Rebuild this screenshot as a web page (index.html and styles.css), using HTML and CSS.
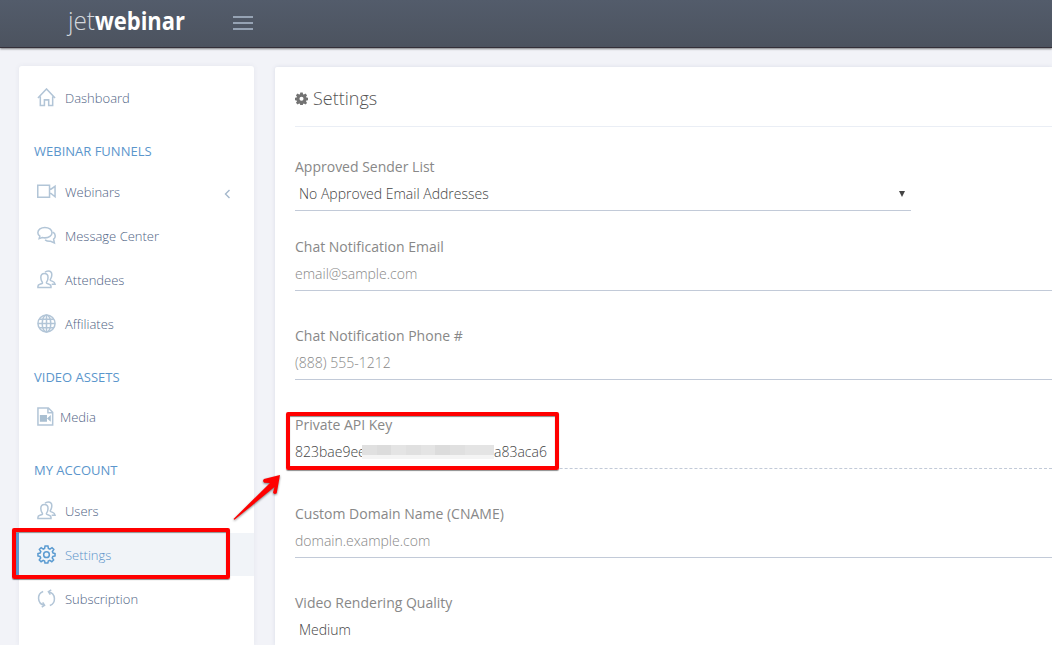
FILE: index.html
```html
<!DOCTYPE html>
<html lang="en">
<head>
<meta charset="utf-8">
<title>JetWebinar Settings</title>
<link rel="stylesheet" href="styles.css">
</head>
<body>
<header class="topbar">
  <svg class="logo" width="122" height="40" viewBox="0 0 122 40"><text class="logo-jet" x="5" y="29.500" textLength="27" lengthAdjust="spacingAndGlyphs">jet</text><text class="logo-web" x="32" y="29.500" textLength="90" lengthAdjust="spacingAndGlyphs">webinar</text></svg>
  <div class="burger"><i></i><i></i><i></i></div>
</header>
<div class="layout">
  <nav class="sidebar">
    <a class="item"><svg class="icon" viewBox="0 0 20 20"><path d="M1 10.500 10 1l9 9.500M3.500 9v9.500h4.300v-6h4.500v6h4.200V9"/></svg>Dashboard</a>
    <h2 class="group">WEBINAR FUNNELS</h2>
    <a class="item"><svg class="icon" viewBox="0 0 20 20"><path d="M.8 3.500h12.400v12.500H.8zM13.200 7.500h1.500L19 4.500v11l-4.300-3.500h-1.500"/></svg>Webinars<svg class="chevron" viewBox="0 0 6 10"><path d="M5 1 1 5l4 4"/></svg></a>
    <a class="item"><svg class="icon" viewBox="0 0 20 20"><path d="M8.300 1.500c4.200 0 7.500 2.400 7.500 5.500s-3.300 5.500-7.500 5.500q-1.500 0-2.800-.4L2.300 13.300l.7-2.600Q.9 9.200.9 7c0-3.100 3.300-5.500 7.400-5.500zM17 6.500q2.200 1.500 2.200 4 0 2-1.700 3.400l.8 3.900-3.900-1.700Q11 16.500 8.500 14.700"/></svg>Message Center</a>
    <a class="item"><svg class="icon" viewBox="0 0 20 20"><path d="M1 18.500v-1.500q0-1.400 2-2l2.300-.8q.8-.4.300-1.300Q4 10.500 4 7.800q0-4 3.800-4t3.800 4q0 2.700-1.500 5-.5.900.3 1.300l2.300.8q2 .6 2 2v1.600zM8.500 2.300Q9.600 1 11.800 1q3.800 0 3.800 4 0 2.600-1.500 4.900-.5.900.4 1.300l2 .8q2 .7 2.500 3h-3.500"/></svg>Attendees</a>
    <a class="item"><svg class="icon" viewBox="0 0 20 20"><circle cx="10" cy="10" r="9"/><ellipse cx="10" cy="10" rx="4.500" ry="9"/><path d="M10 1v18M1 10h18M2.500 5.500h15M2.500 14.500h15"/></svg>Affiliates</a>
    <h2 class="group group-assets">VIDEO ASSETS</h2>
    <a class="item media"><svg class="icon" viewBox="0 0 20 20"><path d="M1 1h11l4.500 4.500V19H1zM11.500 1v5h5"/><path class="fill" d="M3 8.500h7.500v7H3zM10.500 12l4-3.500v7z"/></svg>Media</a>
    <h2 class="group">MY ACCOUNT</h2>
    <a class="item"><svg class="icon" viewBox="0 0 20 20"><path d="M1 18.500v-1.500q0-1.400 2-2l2.300-.8q.8-.4.300-1.300Q4 10.500 4 7.800q0-4 3.800-4t3.800 4q0 2.700-1.500 5-.5.900.3 1.300l2.300.8q2 .6 2 2v1.600zM8.500 2.300Q9.600 1 11.800 1q3.800 0 3.800 4 0 2.600-1.500 4.900-.5.900.4 1.300l2 .8q2 .7 2.500 3h-3.500"/></svg>Users</a>
    <a class="item active"><svg class="icon" viewBox="0 0 20 20"><path d="M8.500 1h3l.5 2.600 1.600.7 2.200-1.500 1.900 1.900-1.500 2.300.7 1.500L19 9v2.500l-2.300.5-.7 1.500 1.500 2.200-1.900 1.900-2.200-1.500-1.500.7-.5 2.200h-3L8 16.800l-1.500-.7-2.200 1.500-1.900-1.900L3.900 13.500 3.200 12 1 11.500V9l2.300-.5.7-1.500-1.500-2.300 1.900-1.900 2.200 1.500L8 3.600z"/><circle cx="10" cy="10.200" r="3"/></svg>Settings</a>
    <a class="item"><svg class="icon" viewBox="0 0 20 20"><path d="M8 17.200C-.2 15.500-.2 5 6.500 2.700M5 19.200l3-2-2-3.200M12 2.800c8.200 1.700 8.200 12.200 1.500 14.500M15 .8l-3 2 2 3.200"/></svg>Subscription</a>
  </nav>
  <main class="panel">
    <h1 class="title"><svg class="cog" viewBox="0 0 14 14"><path fill-rule="evenodd" d="M5.700.5h2.600l.4 1.900.9.400 1.600-1.100 1.800 1.800-1.100 1.600.4.900 1.700.3v2.500l-1.800.4-.3.900 1.100 1.700-1.800 1.700-1.600-1.100-.9.400-.4 1.700H5.700l-.4-1.800-.9-.3-1.600 1.100L1 11.700l1.100-1.600-.4-.9L0 8.800V6.300L1.700 6l.4-.9L1 3.500l1.800-1.800 1.600 1.100.9-.4zM7 5.100a2.200 2.200 0 1 0 0 4.400 2.200 2.200 0 0 0 0-4.400z"/></svg>Settings</h1>
    <div class="field select"><label>Approved Sender List</label><div class="value">No Approved Email Addresses<svg class="caret" viewBox="0 0 6 6"><path d="M0 0h6L3 6z"/></svg></div></div>
    <div class="field"><label>Chat Notification Email</label><div class="value hint">email@sample.com</div></div>
    <div class="field"><label>Chat Notification Phone #</label><div class="value hint">(888) 555-1212</div></div>
    <div class="field key"><label>Private API Key</label><div class="value"><span class="start">823bae9ee</span><span class="mask"><i></i><i></i><i></i><i></i><i></i><i></i><i></i><i></i><i></i></span>a83aca6</div></div>
    <div class="field"><label>Custom Domain Name (CNAME)</label><div class="value hint">domain.example.com</div></div>
    <div class="field quality"><label>Video Rendering Quality</label><div class="value">Medium</div></div>
  </main>
</div>
<div class="mark mark-key"></div>
<div class="mark mark-settings"></div>
<svg class="arrow" width="50" height="50" viewBox="0 0 50 50"><path d="M48 2 32 6q-2 2 .3 3.800l5.700.2L1.500 46l1 .8L42.500 14l-1.500 5.500q1 2.300 3.700.8z"/></svg>
</body>
</html>
```
FILE: styles.css
```css
* { box-sizing: border-box; }
body { margin: 0; height: 645px; overflow: hidden; background: #f2f3f8; font-family: "Open Sans", sans-serif; }
.topbar { height: 48px; display: flex; padding-left: 63px; background: linear-gradient(#535c6b, #4c535f); border-bottom: 1px solid #343039; box-shadow: 0 1px 2px rgba(0,0,0,.5); }
.logo { display: block; overflow: visible; }
.logo-jet { font-size: 25px; font-weight: 300; fill: #d3d7dd; }
.logo-web { font-size: 25px; font-weight: 700; fill: #fff; }
.burger { display: flex; flex-direction: column; gap: 4px; padding: 16px 0 0 48px; }
.burger i { width: 20px; height: 2px; background: #96a3b4; }
.layout { display: flex; height: 597px; padding: 18px 0 0 19px; gap: 21px; }
.sidebar { width: 235px; flex: none; padding-top: 10px; background: #fff; border-radius: 3px 3px 0 0; box-shadow: 0 0 5px rgba(60,80,120,.08); }
.item { display: flex; align-items: center; height: 43px; margin-bottom: 1px; padding: 1px 23px 0 18px; font-size: 13px; font-weight: 300; color: #4f6384; }
.icon { width: 19px; height: 19px; flex: none; margin: -1px 9px 0 0; fill: none; stroke: #b2c5d7; stroke-width: 1.6; }
.icon .fill { fill: #a9bfd1; stroke: none; }
.media .icon { margin: -2px 4px 0 0; }
.chevron { width: 7px; height: 10px; margin: 4px 0 0 auto; fill: none; stroke: #a5b8cc; stroke-width: 1.4; }
.group { height: 50px; margin: 0; padding: 22px 0 0 15px; font-size: 13px; line-height: 18px; font-weight: 400; color: #5b96cc; }
.group-assets { height: 49px; }
.active { margin-left: -3px; background: #f1f4f8; color: #5b93c9; border-left: 3px solid #5b9bd1; }
.active .icon { stroke: #5b9bd1; }
.panel { flex: 1; margin-top: 1px; padding: 0 0 0 20px; overflow: hidden; background: #fff; box-shadow: 0 0 4px rgba(60,80,120,.13); border-radius: 2px 0 0 0; }
.title { display: flex; align-items: center; gap: 5px; height: 60px; margin: 0; padding-top: 2px; border-bottom: 1px solid #eaeef5; font-size: 18px; font-weight: 300; color: #555; }
.cog { width: 13px; height: 13px; margin-top: 1px; fill: #737373; }
.field { height: 89px; font-size: 14px; }
.field label { display: block; height: 20px; line-height: 20px; color: #888; }
.value { display: flex; align-items: center; height: 34px; border-bottom: 1px solid #c2cad8; font-weight: 300; color: #444; }
.hint { color: #888; }
.select { width: 616px; height: 80px; margin-top: 30px; }
.select .value, .quality .value { padding-left: 4px; }
.quality, .quality .value { height: auto; border: 0; }
.quality .value { line-height: 33px; }
.caret { width: 6px; height: 6px; margin: 0 6px 0 auto; fill: #444; }
.key .value { border-bottom-style: dashed; }
.start { width: 67px; }
.mask { display: flex; width: 132px; height: 14px; z-index: 1; background: #e4e4e4; border-bottom: 4px solid #f4f4f4; }
.mask i { flex: 1; }
.mask i:nth-child(3n+1) { background: #e0e0e0; }
.mask i:nth-child(4n+2) { background: #dcdcdc; }
.mark { position: absolute; border: 4px solid #f00; border-radius: 2px; box-shadow: 0 1px 1px rgba(0,0,0,.45), inset 0 1px 1px rgba(0,0,0,.45); }
.mark-key { left: 286px; top: 412px; width: 273px; height: 58px; }
.mark-settings { left: 12px; top: 528px; width: 218px; height: 51px; }
.arrow { position: absolute; left: 232px; top: 473px; fill: #f00; filter: drop-shadow(0 1px 1px rgba(0,0,0,.5)); }
```
